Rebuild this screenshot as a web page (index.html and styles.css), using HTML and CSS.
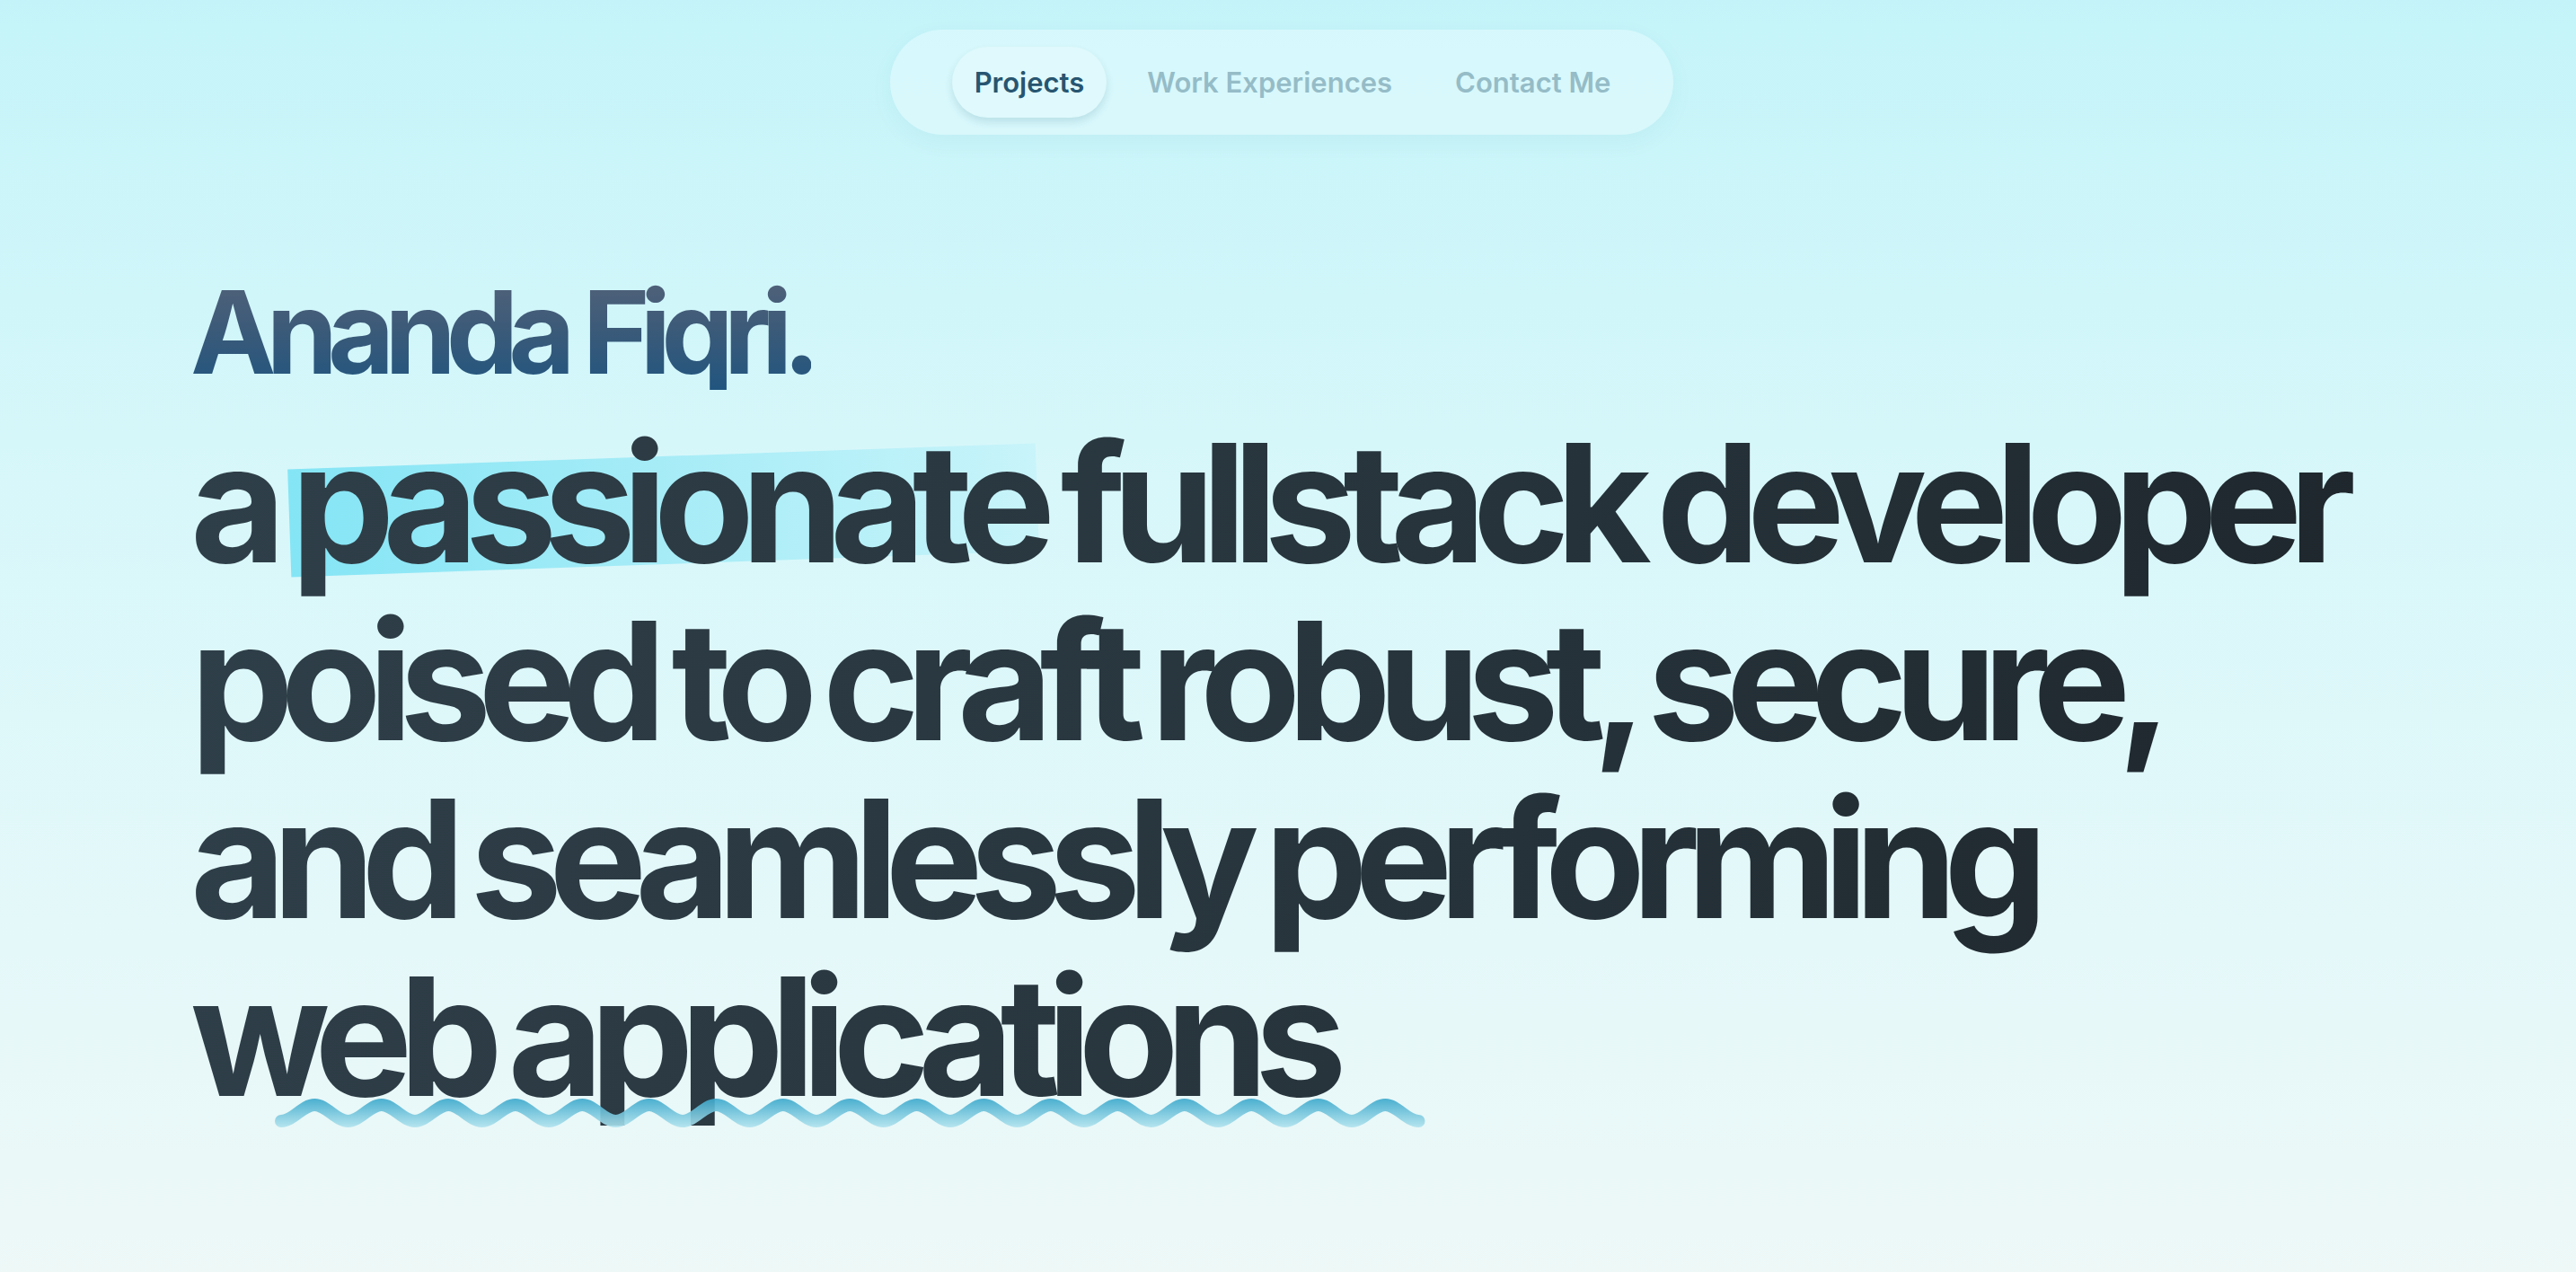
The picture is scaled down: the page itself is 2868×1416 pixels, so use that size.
FILE: index.html
```html
<!DOCTYPE html>
<html lang="en">
<head>
<meta charset="utf-8">
<title>Ananda Fiqri</title>
<link rel="stylesheet" href="styles.css">
</head>
<body>
<header class="topbar">
  <nav class="nav">
    <a class="nav-item active" href="#">Projects</a>
    <a class="nav-item" href="#">Work Experiences</a>
    <a class="nav-item" href="#">Contact Me</a>
  </nav>
</header>
<main class="hero">
  <h1 class="name">Ananda Fiqri.</h1>
  <p class="tagline"><span class="hl-box" aria-hidden="true"></span>a passionate fullstack developer<br>poised to craft robust, secure,<br>and seamlessly performing<br>web applications<svg class="wave" width="1283" height="34" viewBox="0 0 1283 34" aria-hidden="true">
      <defs>
        <linearGradient id="wg" x1="0" y1="1" x2="0" y2="33" gradientUnits="userSpaceOnUse">
          <stop offset="0" stop-color="#3aa8cc"/>
          <stop offset="1" stop-color="#b0e3ee"/>
        </linearGradient>
      </defs>
      <path d="M8 26 C21.57 26 31.68 8 45.25 8 S68.93 26 82.5 26 S106.18 8 119.75 8 S143.43 26 157 26 S180.68 8 194.25 8 S217.93 26 231.5 26 S255.18 8 268.75 8 S292.43 26 306 26 S329.68 8 343.25 8 S366.93 26 380.5 26 S404.18 8 417.75 8 S441.43 26 455 26 S478.68 8 492.25 8 S515.93 26 529.5 26 S553.18 8 566.75 8 S590.43 26 604 26 S627.68 8 641.25 8 S664.93 26 678.5 26 S702.18 8 715.75 8 S739.43 26 753 26 S776.68 8 790.25 8 S813.93 26 827.5 26 S851.18 8 864.75 8 S888.43 26 902 26 S925.68 8 939.25 8 S962.93 26 976.5 26 S1000.18 8 1013.75 8 S1037.43 26 1051 26 S1074.68 8 1088.25 8 S1111.93 26 1125.5 26 S1149.18 8 1162.75 8 S1186.43 26 1200 26 S1223.68 8 1237.25 8 S1260.93 26 1274.5 26" fill="none" stroke="url(#wg)" stroke-width="14" stroke-linecap="round" stroke-linejoin="round"/>
    </svg></p>
</main>
</body>
</html>
```
FILE: styles.css
```css
html, body {
  margin: 0;
  padding: 0;
}
body {
  width: 2868px;
  height: 1416px;
  overflow: hidden;
  background: linear-gradient(180deg, #c4f4f9 0%, #d6f7fa 35%, #e5f8f9 75%, #edf8f7 100%);
  font-family: Inter, "Noto Sans", "Liberation Sans", sans-serif;
}

.topbar {
  display: flex;
  justify-content: center;
  padding-top: 33px;
}
.nav {
  display: flex;
  align-items: center;
  gap: 20px;
  margin-right: 14px;
  padding: 19px 45px 19px 69px;
  border-radius: 60px;
  background: rgba(236, 252, 254, 0.45);
  box-shadow: 0 8px 24px rgba(40, 140, 160, 0.06);
}
.nav-item {
  display: block;
  height: 79px;
  line-height: 79px;
  padding: 0 25px;
  border-radius: 40px;
  font-size: 31px;
  font-weight: 600;
  color: #95bcc7;
  text-decoration: none;
}
.nav-item.active {
  color: #275570;
  background: #dff9fc;
  box-shadow: 0 5px 8px rgba(40, 110, 130, 0.16);
}

.hero {
  padding: 156px 0 0 212px;
}
.name {
  margin: 0;
  font-size: 128px;
  line-height: 128px;
  font-weight: 700;
  letter-spacing: -0.087em;
  background: linear-gradient(180deg, #536279 0%, #3a5a79 50%, #21557f 100%);
  -webkit-background-clip: text;
  background-clip: text;
  color: transparent;
  display: inline-block;
}
.tagline {
  position: relative;
  margin: 27px 0 0;
  font-size: 183px;
  line-height: 198px;
  font-weight: 700;
  letter-spacing: -0.081em;
  word-spacing: -8px;
  background: linear-gradient(100deg, #2f3f49 0%, #27343c 50%, #1c2328 100%);
  -webkit-background-clip: text;
  background-clip: text;
  color: transparent;
  white-space: nowrap;
}
.hl-box {
  position: absolute;
  z-index: -1;
  left: 110px;
  top: 47px;
  width: 833px;
  height: 120px;
  transform: rotate(-2deg);
  background: linear-gradient(90deg, #84e5f5 0%, #a6ecf7 50%, #c8f4fa 100%);
}
.wave {
  position: absolute;
  left: 93px;
  top: 761px;
  opacity: 0.9;
}
```
